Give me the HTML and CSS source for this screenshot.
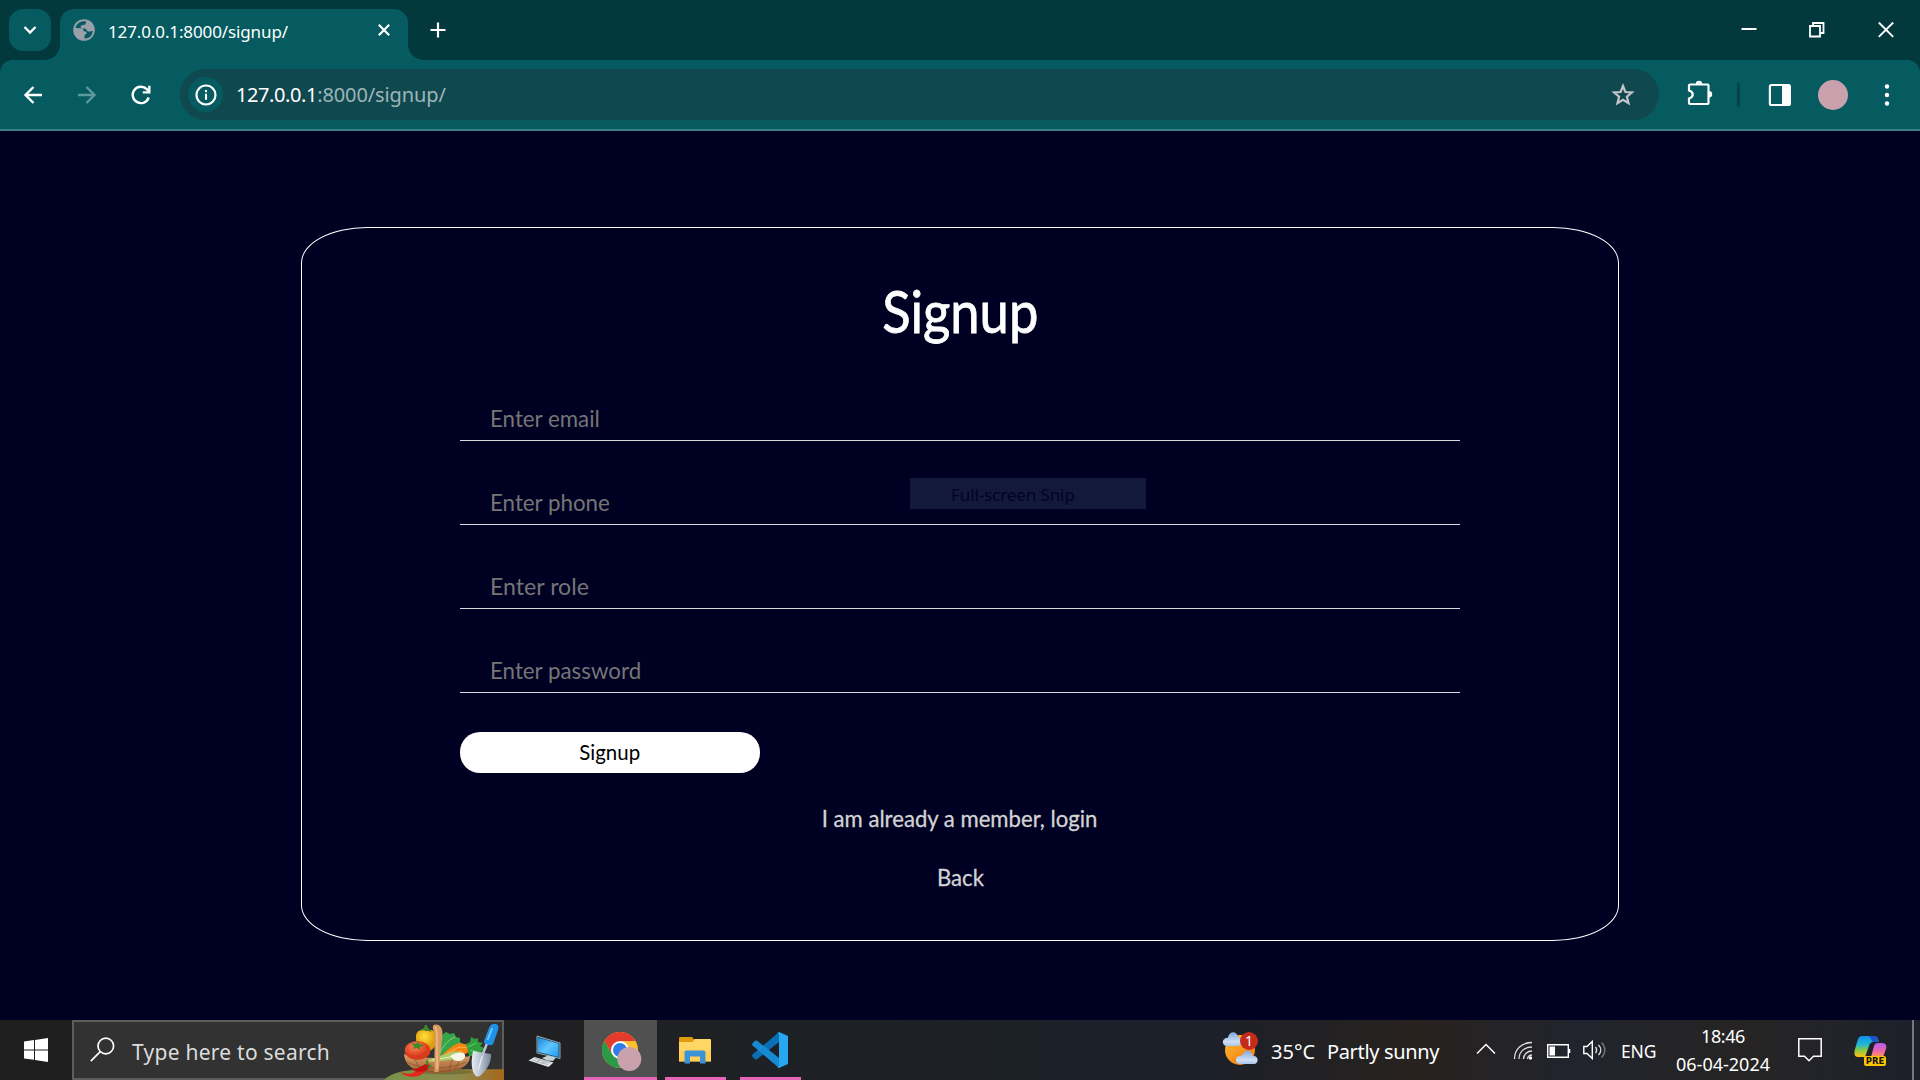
FILE: index.html
```html
<!DOCTYPE html>
<html lang="en">
<head>
<meta charset="utf-8">
<title>127.0.0.1:8000/signup/</title>
<link rel="stylesheet" href="styles.css">
</head>
<body>
<div class="screen">
  <header class="tabstrip">
    <button class="tab-search" aria-label="Search tabs"><svg width="42" height="42" viewBox="0 0 42 42"><path d="M15.500 18l5.500 5.500 5.500-5.500" fill="none" stroke="#fff" stroke-width="2.400"/></svg></button>
    <div class="tab">
      <svg class="globe" width="22" height="22" viewBox="0 0 22 22"><circle cx="11" cy="11" r="10.800" fill="#9aa0a9"/><path d="M13 2.500c-5-1.200-9.500 2-10.500 6.500l5 .3c2.300.2 3.300 1.200 3.300 3.200h2.700v2.500c-1.200.3-2 .8-2 2v2.500c5 .2 8-3.300 8.200-7.500-1.500-.2-2.200.8-4 .5-2-.3-2.200-2.700-4-3-1.500-.2-3.500.5-4-1-.3-1.500.8-2.300 2-2.500 1.300-.3 2.700.2 3-1.500.1-.9.500-1.300.3-2z" fill="#055b60"/></svg>
      <span class="tab-title">127.0.0.1:8000/signup/</span>
      <svg class="tab-close" width="14" height="14" viewBox="0 0 14 14"><path d="M1.800 1.800l10.400 10.400M12.200 1.800L1.800 12.200" stroke="#fff" stroke-width="2.200"/></svg>
    </div>
    <svg class="new-tab" width="16" height="16" viewBox="0 0 16 16"><path d="M8 .5v15M.5 8h15" stroke="#fff" stroke-width="2.200"/></svg>
    <div class="window-controls">
      <svg width="16" height="16" viewBox="0 0 16 16"><path d="M.5 7h15" stroke="#fff" stroke-width="2"/></svg>
      <svg width="16" height="16" viewBox="0 0 16 16"><path d="M1 4h10v10.500H1zM4 4V1h10.500v10h-3" fill="none" stroke="#fff" stroke-width="1.800"/></svg>
      <svg width="16" height="16" viewBox="0 0 16 16"><path d="M.8.500l14.400 14.400M15.200.5L.8 14.900" stroke="#fff" stroke-width="1.900"/></svg>
    </div>
  </header>

  <nav class="toolbar">
    <svg class="nav-icon" width="20" height="20" viewBox="0 0 20 20"><path d="M19 10H3M10.500 2L2.500 10l8 8" fill="none" stroke="#fff" stroke-width="2.400"/></svg>
    <svg class="nav-icon" width="20" height="20" viewBox="0 0 20 20"><path d="M1 10h16M9.500 2l8 8-8 8" fill="none" stroke="#5f999c" stroke-width="2.400"/></svg>
    <svg class="nav-icon" width="20" height="20" viewBox="0 0 20 20"><path d="M17.700 12.500A8.200 8.200 0 1 1 15.800 4.200l2 2" fill="none" stroke="#fff" stroke-width="2.400"/><path d="M19.500.8v7.700h-7.700V6.200H17.200V.8z" fill="#fff"/></svg>
    <div class="omnibox">
      <span class="site-info"><svg width="22" height="22" viewBox="0 0 22 22"><circle cx="11" cy="11" r="9.500" fill="none" stroke="#fff" stroke-width="2.200"/><path d="M11 9.800v6M11 6v2.200" stroke="#fff" stroke-width="2.100"/></svg></span>
      <span class="url"><span class="host">127.0.0.1</span>:8000/signup/</span>
      <svg class="star" width="26" height="26" viewBox="0 0 26 26"><path d="M13 4l2.400 6 6.500.5-5 4.200 1.600 6.500-5.500-3.500-5.500 3.500 1.600-6.500-5-4.200 6.500-.5z" fill="none" stroke="#c4c5c9" stroke-width="2.200"/></svg>
    </div>
    <svg class="puzzle" width="28" height="28" viewBox="0 0 28 28"><path d="M4 5.500h17.500a1 1 0 0 1 1 1V24a1 1 0 0 1-1 1H4a1 1 0 0 1-1-1v-4.500c5-1.500 5-6.500 0-8V6.500a1 1 0 0 1 1-1z" fill="none" stroke="#fff" stroke-width="2.200"/><path d="M9.800 5a3.200 3.200 0 0 1 6.400 0zM23 12a3.200 3.200 0 0 1 0 6.400z" fill="#fff"/></svg>
    <span class="divider"></span>
    <svg class="panel" width="24" height="24" viewBox="0 0 24 24"><rect x="1.900" y="2" width="20" height="20" rx="1.500" fill="none" stroke="#fff" stroke-width="2.200"/><path d="M14 2h8v20h-8z" fill="#fff"/></svg>
    <span class="avatar"></span>
    <svg class="menu" width="6" height="22" viewBox="0 0 6 22"><g fill="#fff"><circle cx="3" cy="2.500" r="2.200"/><circle cx="3" cy="11" r="2.200"/><circle cx="3" cy="19.500" r="2.200"/></g></svg>
  </nav>

  <main class="page">
    <form class="card">
      <h1 class="title"><span class="narrow">Signup</span></h1>
      <div class="fields">
        <label class="field"><span class="narrow">Enter email</span></label>
        <label class="field"><span class="narrow">Enter phone</span></label>
        <label class="field"><span class="narrow role">Enter role</span></label>
        <label class="field"><span class="narrow">Enter password</span></label>
        <button class="submit" type="button"><span class="narrow">Signup</span></button>
      </div>
      <a class="link"><span class="narrow">I am already a member, login</span></a>
      <a class="link"><span class="narrow">Back</span></a>
    </form>
    <div class="snip">Full-screen Snip</div>
  </main>

  <footer class="taskbar">
    <div class="start"><svg width="24" height="24" viewBox="0 0 24 24"><path d="M0 3.500l10-1.400v9.300H0zM11 2l13-2v11.400H11zM0 12.500h10v9.300L0 20.500zM11 12.500h13V24l-13-1.900z" fill="#fff"/></svg></div>
    <div class="search">
      <svg class="lens" width="25" height="25" viewBox="0 0 25 25"><circle cx="15.800" cy="9" r="7.800" fill="none" stroke="#fff" stroke-width="1.700"/><path d="M10.300 14.600L.8 24.200" stroke="#fff" stroke-width="1.700"/></svg>
      <span class="search-text">Type here to search</span>
      <svg class="harvest" width="120" height="60" viewBox="0 0 120 60">
        <defs>
          <linearGradient id="hill"><stop offset="0" stop-color="#77934a"/><stop offset=".6" stop-color="#8d8c4c"/><stop offset="1" stop-color="#a6671c"/></linearGradient>
          <linearGradient id="wick" x1="0" y1="0" x2="0" y2="1"><stop offset="0" stop-color="#dba268"/><stop offset="1" stop-color="#9c5c30"/></linearGradient>
          <radialGradient id="tom" cx=".4" cy=".3"><stop offset="0" stop-color="#ff8658"/><stop offset="1" stop-color="#d93c1b"/></radialGradient>
          <radialGradient id="pep" cx=".4" cy=".3"><stop offset="0" stop-color="#ffdf3c"/><stop offset="1" stop-color="#e09b08"/></radialGradient>
          <linearGradient id="blade"><stop offset="0" stop-color="#e8edf4"/><stop offset=".5" stop-color="#b3bdcc"/><stop offset="1" stop-color="#76839a"/></linearGradient>
        </defs>
        <path d="M0 60c8-8 22-10.500 42-10.800H120V60z" fill="url(#hill)"/>
        <ellipse cx="62" cy="52" rx="26" ry="2.500" fill="#5c5a2c" opacity=".5"/>
        <path d="M32 18c-1-8 7-10 10-7 7-3 13 2 11 10-2 8-8 12-13 11-5-1-8-7-8-14z" fill="url(#pep)"/>
        <path d="M35 11c3-3 5-1 6-6l2 0c0 4 4 4 4 7-4-2-7-2-12-1z" fill="#3b8a2b"/>
        <path d="M53 35c0-10 3-20 9-23l4 2 4-1 2 4 4 1 0 4 4 3-8 5-10 8z" fill="#35a54a"/>
        <path d="M55 34c4-8 9-14 16-17" stroke="#8bd27d" fill="none"/>
        <path d="M20 34c10 5 50 5 66 2 0 10-12 17-33 17S21 47 20 34z" fill="url(#wick)"/>
        <path d="M23 42c16 8 42 8 59 0M29 48c14 5 34 5 47 0M30 38l6 11M43 39v12M68 39l-3 12M77 38l-6 11" fill="none" stroke="#7d4824" stroke-width=".8" opacity=".7"/>
        <path d="M57 36c6-6 12-11 18-13l11 2 1 6-12 6z" fill="#f58410"/><path d="M62 34l13-7 11 1M66 36l12-5" stroke="#ffb040" stroke-width="1.200" fill="none"/>
        <path d="M82 24l4-2 1-5 4 2 3-1 0 4 5 1-3 3 6 3-5 2 4 5-5 0-1 5-5-5-5 0-1-5z" fill="#2f9e3c"/><path d="M84 27l8-4M86 30l10 3" stroke="#6fca5c" stroke-width="1"/>
        <path d="M44 40l24-8c6-1 11 0 12 2l-6 5-28 3z" fill="#a9cf70"/><path d="M48 40l24-4" stroke="#e1eeb0" stroke-width="1.200"/><path d="M66 36c6-4 14-5 15-1s-5 8-11 5z" fill="#f6f7e6"/>
        <ellipse cx="33.500" cy="30.500" rx="12.800" ry="9.500" fill="url(#tom)"/>
        <path d="M27 23l5 1 2-3 1 3 5 1-4 2 0 3-3-2-4 1 1-3z" fill="#3f8b29"/>
        <path d="M50.500 52V18c0-9-3-9-1-13 5-2 9.500 2 9 10L54.500 52z" fill="#d79b62"/><path d="M53 49V15c0-4-1-6-1.500-8" stroke="#f0c38e" stroke-width="1.200" fill="none"/>
        <path d="M16 52c8 3 14 2 18-3 3-2 6-3 9-3-2 6-4 9-9 10-7 2-14 0-18-4z" fill="#e2271d"/><path d="M26 49c8 1 12-4 18-6l2 4c-5 6-12 6-20 2z" fill="#c3120f"/><path d="M43 45l0-4M44 48l3-3" stroke="#3d8a2b" stroke-width="2"/>
        <path d="M89 31c3 0 8 2 18 3 1 7-4 16-10 21-2 2-5 2-6 0-4-6-4-14-2-24z" fill="url(#blade)"/>
        <path d="M94 50l5-16" stroke="#eef2f7" stroke-width="1.500" opacity=".8"/>
        <path d="M98 36l6-15" stroke="#b9c3d1" stroke-width="2.500"/>
        <path d="M100 21l5-13c1.500-4 5.500-5 8-3.500 2 1.300 1.500 4 .8 6l-4.500 13c-1 2-3.500 2-6 1s-3.800-1.500-3.300-3.500z" fill="#1f93e8"/><path d="M103.500 20l4.800-12" stroke="#74c8ff" stroke-width="1.800"/>
      </svg>
    </div>
    <div class="app computer">
      <svg width="34" height="34" viewBox="0 0 34 34"><defs><linearGradient id="scr" x2="1" y2="1"><stop offset="0" stop-color="#1783d8"/><stop offset=".5" stop-color="#61c6ff"/><stop offset="1" stop-color="#1e9af2"/></linearGradient></defs><path d="M9 1l23 7v15.500L9 18z" fill="#1d506e" stroke="#98a8b0"/><path d="M10 2.500l20.500 6.300V22L10 16.800z" fill="url(#scr)"/><path d="M14 23l6-2.500 8 2-3 3.500-6-.5z" fill="#c3d0d6"/><path d="M.5 25.500l6-3.500 19 5.500-5 4.500z" fill="#dce2e5"/><path d="M4 25l16 4.500M7 23.500l15 4.300M8 28l5-4M13 29.500l5-4" stroke="#9aa3a8" stroke-width=".7"/></svg>
    </div>
    <div class="app chrome active">
      <svg width="40" height="40" viewBox="0 0 40 40"><circle cx="18" cy="18" r="18" fill="#fbc02d"/><path d="M18 9h15.600A18 18 0 0 0 2.400 9l8 13.500z" fill="#e33b2e"/><path d="M2.400 9A18 18 0 0 0 18 36l7.800-13.500H10.200z" fill="#2a9a48"/><circle cx="18" cy="18" r="9" fill="#fff"/><circle cx="18" cy="18" r="7" fill="#2f7de9"/><circle cx="27.300" cy="27" r="12" fill="#c9a1ad"/></svg>
    </div>
    <div class="app folder running">
      <svg width="32" height="28" viewBox="0 0 32 28"><path d="M0 1.500C0 .5.500 0 1.500 0H13l2 2.500V7H0z" fill="#e09c08"/><path d="M0 5h13.500l2-3H31a1 1 0 0 1 1 1v21.500H0z" fill="#ffd563"/><path d="M0 14h32v10.500H0z" fill="#ffc94a" opacity=".6"/><path d="M5.500 26.500V15.500c0-1.300.7-2 2-2h17c1.300 0 2 .7 2 2v11h-5.500V19.500H11v7z" fill="#3d93d8"/></svg>
    </div>
    <div class="app vscode running">
      <svg width="36" height="36" viewBox="0 0 36 36"><path d="M27 0L.8 22.200c-1 .9-1 2 0 2.900l2 1.900c.8.700 1.700.7 2.600.1L27 10z" fill="#0a70b5"/><path d="M27 36L.8 13.800c-1-.9-1-2 0-2.900l2-1.900c.8-.7 1.700-.7 2.600-.1L27 26z" fill="#168bd4"/><path d="M27 0l9 4v28l-9 4c-.5 0-1-.5-1.500-1 1 .3 1.500-.5 1.500-2V3c0-1.300-.7-2-1.700-1.700z" fill="#29a8f2"/></svg>
    </div>
    <div class="tray">
      <svg class="weather" width="38" height="34" viewBox="0 0 38 34"><defs><linearGradient id="sun" x2=".7" y2="1"><stop offset="0" stop-color="#ffc233"/><stop offset="1" stop-color="#f47a10"/></linearGradient><linearGradient id="cl" x2="0" y2="1"><stop offset="0" stop-color="#7fa7e0"/><stop offset=".7" stop-color="#cfdff5"/><stop offset="1" stop-color="#a9c3ea"/></linearGradient></defs><circle cx="18" cy="18" r="15" fill="url(#sun)"/><path d="M4 14a4 4 0 0 1-1-7.500c1-1 2-1 3-.7C7-1.500 15-1.500 16 5c4 0 5 9 0 9z" fill="url(#cl)"/><path d="M18 32a4 4 0 0 1 0-8c1-1 2-1 2.500-.7 1-6.300 9.500-6.300 10.500.7 6-.5 6 8 1 8z" fill="url(#cl)"/><circle cx="27" cy="9" r="9" fill="#c42b1c"/><text x="27" y="14" text-anchor="middle" class="badge-text">1</text></svg>
      <span class="temp">35°C</span>
      <span class="sky">Partly sunny</span>
      <svg class="chevron" width="20" height="12" viewBox="0 0 20 12"><path d="M1 10.500L10 1.500l9 9" fill="none" stroke="#fff" stroke-width="1.500"/></svg>
      <svg class="wifi" width="20" height="20" viewBox="0 0 20 20"><g fill="none" stroke="#ddd" stroke-width="1.300"><path d="M1.500 18C1.500 8 9 1.500 19 1.500M6 18C6 11 11 6 19 6M10.500 18c0-4.500 4-8 8.500-8M14.500 18c.3-2 2-4 4.500-4"/></g><circle cx="17.500" cy="17" r="1.700" fill="#fff"/></svg>
      <svg class="battery" width="24" height="14" viewBox="0 0 24 14"><path d="M.7.7h20.600v12.600H.7z" fill="none" stroke="#fff" stroke-width="1.400"/><path d="M2.500 2.500h5.500v9H2.500zM22 5h1.300v4H22z" fill="#fff"/></svg>
      <svg class="volume" width="24" height="20" viewBox="0 0 24 20"><g fill="none" stroke-width="1.400"><path d="M.8 6.500H4L9.300 1.500v17L4 13.500H.8z" stroke="#fff"/><path d="M12.500 7c1.500 2 1.500 4 0 6M15.500 5c3 3 3 7 0 10" stroke="#ddd"/><path d="M18.500 2.500c4.500 4.500 4.500 10.500 0 15" stroke="#777"/></g></svg>
      <span class="lang">ENG</span>
      <span class="clock"><span class="time">18:46</span><span>06-04-2024</span></span>
      <svg class="notice" width="24" height="26" viewBox="0 0 24 26"><path d="M.8 1.800h22.400v17.400H15.500L11 23.800l-4.500-4.600H.8z" fill="none" stroke="#fff" stroke-width="1.500"/></svg>
      <svg class="copilot" width="34" height="32" viewBox="0 0 34 32"><defs><linearGradient id="cp1" x2="0" y2="1"><stop offset="0" stop-color="#118fe8"/><stop offset=".4" stop-color="#20b8d8"/><stop offset=".65" stop-color="#7fc94c"/><stop offset="1" stop-color="#ffc20e"/></linearGradient><linearGradient id="cp2" x2="0" y2="1"><stop offset="0" stop-color="#b45cf0"/><stop offset=".6" stop-color="#f065a8"/><stop offset="1" stop-color="#ff9f4a"/></linearGradient></defs><path d="M8 1h12c3 0 4 2 5 6h-6c-2 0-3 1-4 4l-4 11H4C0 22 0 18 1 14L4 4c1-2 2-3 4-3z" fill="url(#cp1)"/><path d="M14 1h6c3 0 4 2 5 6h-6c-1 0-2-5-5-6z" fill="#1b55c8"/><path d="M24 8h4c4 0 5 3 4 6l-3 8H17l3-11c.5-2 2-3 4-3z" fill="url(#cp2)"/><rect x="10" y="21" width="22" height="10" rx="2" fill="#ffc400"/><text x="21" y="29" text-anchor="middle" class="pre">PRE</text></svg>
      <span class="desktop-edge"></span>
    </div>
  </footer>
</div>
</body>
</html>
```
FILE: styles.css
```css
* { box-sizing: border-box; }
body { margin: 0; background: #000022; font-family: "Noto Sans", sans-serif; overflow: hidden; }
svg { display: block; flex: none; }
.screen { width: 1920px; height: 1080px; display: flex; flex-direction: column; }

/* Tab strip */
.tabstrip { height: 60px; background: #03383d; display: flex; align-items: flex-start; color: #fff; }
.tab-search { width: 42px; height: 42px; margin: 9px; padding: 0; border: 0; border-radius: 14px; background: #055b60; }
.tab { position: relative; width: 348px; height: 51px; background: #055b60; border-radius: 14px 14px 0 0; margin-top: 9px; padding: 0 17px 9px 13px; display: flex; align-items: center; }
.tab::before, .tab::after { content: ""; position: absolute; bottom: 0; width: 15px; height: 15px; }
.tab::before { right: 100%; background: radial-gradient(circle at 0 0, transparent 14.500px, #055b60 15px); }
.tab::after { left: 100%; background: radial-gradient(circle at 100% 0, transparent 14.500px, #055b60 15px); }
.tab-title { margin-left: 13px; font-size: 17px; letter-spacing: -.12px; line-height: 24px; padding-top: 3px; }
.tab-close { margin-left: auto; }
.new-tab { margin: 22px 0 0 22px; }
.window-controls { margin: 22px 26.500px 0 auto; display: flex; gap: 52.500px; }

/* Toolbar */
.toolbar { height: 71px; border-bottom: 2px solid #3b7f86; display: flex; align-items: center; padding: 0 30px 0 23px; background: radial-gradient(circle at 12px 12px, #055b60 11.500px, #03383d 12px) 0 0 / 12px 12px no-repeat, radial-gradient(circle at 0 12px, #055b60 11.500px, #03383d 12px) 100% 0 / 12px 12px no-repeat, #055b60; }
.nav-icon { margin-right: 34px; }
.omnibox { width: 1479px; height: 51px; margin-left: -5px; border-radius: 26px; background: #10484f; display: flex; align-items: center; padding: 0 23px 0 8px; }
.site-info { width: 35px; height: 35px; border-radius: 50%; background: #055b60; display: grid; place-items: center; }
.url { margin-left: 13px; font-size: 20px; color: #9db5b8; line-height: 28px; letter-spacing: -.1px; }
.host { color: #fff; letter-spacing: -.4px; }
.star { margin-left: auto; }
.puzzle { margin: -3px 0 0 27px; }
.divider { width: 3px; height: 24px; margin-left: 23px; background: #03444a; }
.panel { margin-left: 27.500px; }
.avatar { width: 30px; height: 30px; margin-left: 26px; border-radius: 50%; background: #c9a1ad; }
.menu { margin-left: 36px; }

/* Signup page */
.page { position: relative; height: 889px; padding-top: 96px; }
.card { width: 1318px; height: 714px; margin: 0 auto; border: 1px solid #fff; border-radius: 5%; font-family: Lato, sans-serif; color: #fff; display: flex; flex-direction: column; align-items: center; }
.narrow { display: inline-block; transform: scaleX(.93); }
.title { margin: 48px 0 0; font-size: 58px; font-weight: 400; line-height: 70px; -webkit-text-stroke: .8px #fff; }
.title .narrow { transform: scaleX(.905); }
.fields { width: 1000px; margin-top: 11px; }
.field { display: flex; align-items: flex-end; height: 84px; padding: 0 0 8px 30px; border-bottom: 1px solid #d8d8d8; font-size: 24px; line-height: 29px; color: #757575; }
.field .narrow { transform-origin: left; }
.field .role { transform: scaleX(.965); }
.submit { display: block; width: 300px; height: 41px; margin-top: 39px; padding: 0 0 2px; border: 0; border-radius: 20px; background: #fff; color: #000; font: 22px/39px Lato, sans-serif; }
.link { margin-top: 30px; font-size: 24px; line-height: 29px; color: #d3d3d3; -webkit-text-stroke: .3px #d3d3d3; }
.link .narrow { transform: scaleX(.922); }
.link + .link { margin-top: 30px; }
.snip { position: absolute; left: 910px; top: 347px; width: 236px; height: 31px; padding-left: 41px; background: #12193b; color: #030326; font-size: 17px; line-height: 33px; letter-spacing: -.1px; }

/* Taskbar */
.taskbar { height: 60px; display: flex; color: #fff; background: linear-gradient(90deg, #1f1f1f 0, #202022 560px, #1d2125 800px, #1c2029 1200px, #28221f 1420px, #21242d 1580px, #262423 1740px, #22232b 1830px, #1d2028 1920px); }
.start { width: 72px; padding: 18px 0 0 24px; }
.search { width: 432px; border: 2px solid #5d5d5d; background: #323232; display: flex; }
.lens { margin: 15px 0 0 16px; }
.search-text { margin: 15px 0 0 17px; font-size: 21px; line-height: 30px; letter-spacing: .25px; color: #dcdcdc; white-space: nowrap; }
.harvest { margin: -2px -2px 0 auto; }
.app { height: 60px; }
.computer { width: 80px; padding: 15px 0 0 24px; }
.chrome { width: 73px; padding: 12px 0 0 18px; background: #505050; border-bottom: 3px solid #e665b8; }
.running { width: 61px; border-bottom: 3px solid #e665b8; }
.folder { margin-left: 8px; padding: 17px 0 0 14px; }
.vscode { margin-left: 14px; padding: 12px 0 0 12px; }
.tray { margin-left: auto; display: flex; align-items: flex-start; width: 698px; line-height: 28px; white-space: nowrap; }
.weather { margin-top: 12px; }
.badge-text { font: 14px "Noto Sans", sans-serif; fill: #fff; }
.temp { width: 56px; margin: 18px 0 0 11px; font-size: 20px; }
.sky { width: 124px; font-size: 20px; margin-top: 18px; letter-spacing: -.35px; }
.chevron { margin: 23px 0 0 25px; }
.wifi { margin: 21px 0 0 17px; }
.battery { margin: 24px 0 0 14px; }
.volume { margin: 20px 0 0 12px; }
.lang { width: 50px; margin: 17px 0 0 14px; font-size: 17.500px; letter-spacing: -.2px; }
.clock { width: 96px; margin-top: 2px; margin-left: 4px; display: flex; flex-direction: column; text-align: center; font-size: 18px; }
.time { letter-spacing: -.4px; }
.notice { margin: 17px 0 0 27px; }
.copilot { margin: 15px 0 0 32px; }
.pre { font: bold 8.500px "DejaVu Sans", sans-serif; fill: #111; }
.desktop-edge { width: 2px; height: 60px; margin-left: auto; margin-right: 6px; background: #77777b; }
```
